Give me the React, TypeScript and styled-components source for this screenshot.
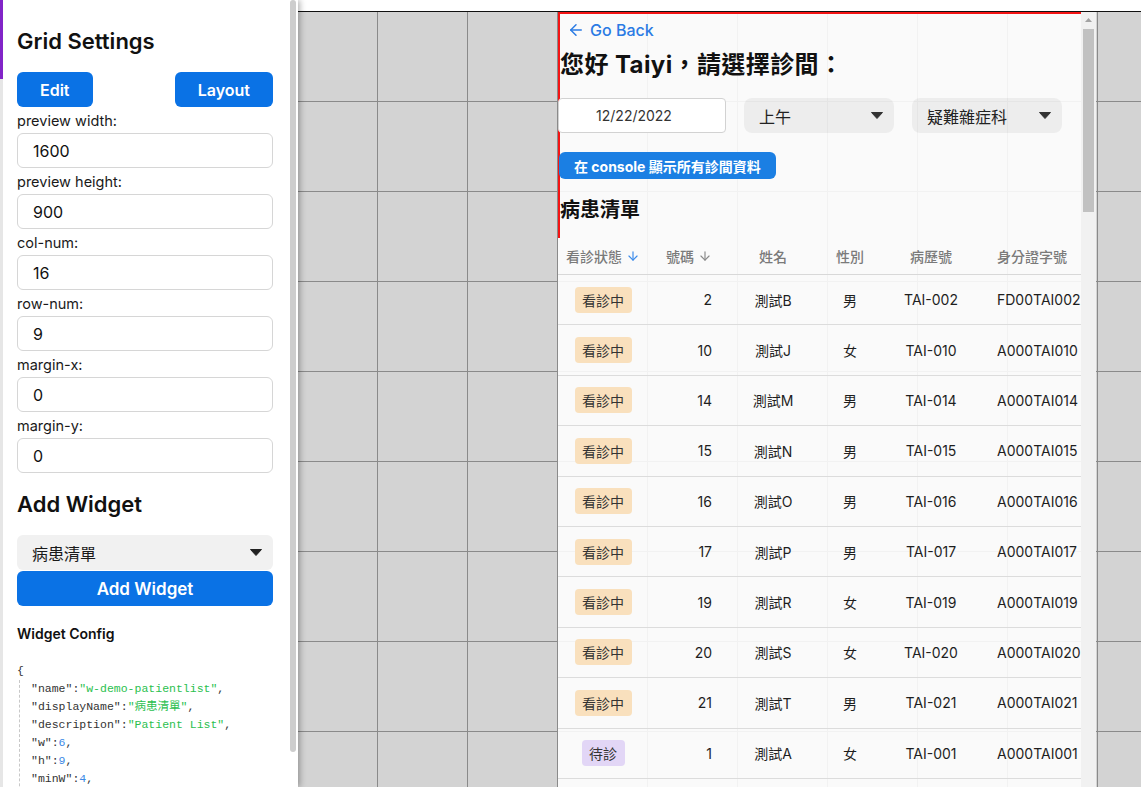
import React from "react";
import styled, { createGlobalStyle } from "styled-components";
import { ArrowLeft, ArrowDown } from "lucide-react";

if (typeof document !== "undefined") {
  document.documentElement.lang = "zh-Hant-TW";
}

const GlobalStyle = createGlobalStyle`
  html, body { margin: 0; padding: 0; height: 100%; overflow: hidden; }
  body {
    font-family: Inter, "Noto Sans CJK TC", sans-serif;
    color: #111;
    background: #fff;
  }
  #root { height: 100%; }
  *, *::before, *::after { box-sizing: border-box; }
`;

const Page = styled.div`
  display: flex;
  width: 1141px;
  height: 787px;
  overflow: hidden;
`;

/* ---------- Left settings panel ---------- */

const PanelFrame = styled.aside`
  position: relative;
  z-index: 2;
  flex: 0 0 298px;
  height: 100%;
  background: #fff;
  border-left: 3px solid;
  border-image: linear-gradient(to bottom, #8224c8 80px, #e6e6e6 80px) 1;
  box-shadow: 2px 0 6px rgba(0, 0, 0, 0.3);
`;

const PanelScroll = styled.div`
  height: 100%;
  overflow-y: auto;
  padding: 26px 25px 0 14px;
  scrollbar-width: none;
  &::-webkit-scrollbar { display: none; }
`;

const PanelThumb = styled.div`
  position: absolute;
  top: 0;
  right: 2px;
  width: 6px;
  height: 752px;
  border-radius: 3px;
  background: #cdcdcd;
`;

const PanelTitle = styled.h2<{ $mt?: number }>`
  margin: ${(p) => p.$mt ?? 0}px 0 0;
  font-size: 22px;
  line-height: 30px;
  font-weight: 600;
  color: #111;
`;

const ButtonRow = styled.div`
  display: flex;
  justify-content: space-between;
  margin-top: 16px;
`;

const PrimaryButton = styled.button<{ $full?: boolean }>`
  display: block;
  height: 35px;
  padding: 0 23px;
  border: none;
  border-radius: 6px;
  background: #0a72e5;
  color: #fff;
  font-family: inherit;
  font-size: ${(p) => (p.$full ? 17 : 16)}px;
  font-weight: 600;
  width: ${(p) => (p.$full ? "100%" : "auto")};
  margin-top: ${(p) => (p.$full ? 1 : 0)}px;
  cursor: pointer;
`;

const FieldLabel = styled.label`
  display: block;
  margin-top: 4px;
  font-size: 14.5px;
  line-height: 20px;
  color: #1a1a1a;
`;

const TextInput = styled.input`
  display: block;
  width: 100%;
  height: 35px;
  margin-top: 2px;
  padding: 0 15px;
  border: 1px solid #d6d6d6;
  border-radius: 6px;
  background: #fff;
  font-family: inherit;
  font-size: 16px;
  color: #111;
  outline: none;
`;

const PanelSelect = styled.div`
  display: flex;
  align-items: center;
  justify-content: space-between;
  height: 35px;
  margin-top: 16px;
  padding: 0 11px 0 15px;
  border-radius: 6px;
  background: #f1f1f1;
  font-size: 16px;
  color: #1a1a1a;
`;

const ConfigTitle = styled.h3`
  margin: 18px 0 0;
  font-size: 14px;
  line-height: 20px;
  font-weight: 600;
  color: #111;
`;

const Code = styled.div`
  margin-top: 18px;
  font-family: "Liberation Mono", "Noto Sans CJK TC", monospace;
  font-size: 11.5px;
  line-height: 18px;
  color: #333;
  white-space: pre;
`;

const CodeIndent = styled.div`
  margin-left: 2px;
  padding-left: 11px;
  border-left: 1px dashed #c8c8c8;
`;

const Str = styled.span`
  color: #2bbf4f;
`;

const Num = styled.span`
  color: #3d8ae6;
`;

const Caret = ({ color = "#222" }: { color?: string }) => (
  <svg width="12" height="7" viewBox="0 0 12 7">
    <path d="M0.5 0.5 L11.5 0.5 L6 6.5 Z" fill={color} strokeLinejoin="round" stroke={color} strokeWidth="1" />
  </svg>
);

/* ---------- Canvas ---------- */

const Canvas = styled.main`
  position: relative;
  flex: 1;
  overflow: hidden;
  background: #fff;
  padding-top: 11px;
`;

const Grid = styled.div`
  position: relative;
  margin-left: -11px;
  width: 1440px;
  height: 810px;
  background-color: #d3d3d3;
  background-image:
    linear-gradient(#111, #111),
    linear-gradient(to right, #8a8a8a 1px, transparent 1px),
    linear-gradient(to bottom, #8a8a8a 1px, transparent 1px);
  background-size: 100% 1px, 90px 90px, 90px 90px;
  background-repeat: no-repeat, repeat, repeat;
`;

const Widget = styled.section<{ $col: number }>`
  position: absolute;
  top: 1px;
  left: ${(p) => p.$col * 90 + 1}px;
  width: 538px;
  height: 809px;
  display: flex;
  background: rgba(255, 255, 255, 0.886);
`;

const WidgetScroll = styled.div`
  flex: 1;
  min-width: 0;
  overflow-y: auto;
  overflow-x: hidden;
  scrollbar-width: none;
  &::-webkit-scrollbar { display: none; }
`;

const ScrollRail = styled.div`
  flex: 0 0 15px;
  display: flex;
  flex-direction: column;
  align-items: center;
  background: #f1f1f1;
`;

const RailButton = styled.div`
  display: flex;
  align-items: center;
  justify-content: center;
  width: 15px;
  height: 15px;
`;

const RailThumb = styled.div<{ $h: number }>`
  width: 11px;
  height: ${(p) => p.$h}px;
  margin-top: 2px;
  background: #c1c1c1;
`;

const WidgetBody = styled.div`
  border-top: 2px solid #f41414;
`;

const Intro = styled.div`
  border-left: 2px solid #f41414;
  padding: 4px 0 14px;
`;

const GoBack = styled.a`
  display: inline-flex;
  align-items: center;
  gap: 5px;
  height: 24px;
  padding-left: 7px;
  color: #2b7be4;
  font-size: 16px;
  font-weight: 500;
  text-decoration: none;
`;

const Greeting = styled.h1`
  margin: 6px 0 0;
  font-size: 24px;
  line-height: 32px;
  font-weight: 700;
  color: #111;
  white-space: nowrap;
  letter-spacing: 0.4px;
`;

const Controls = styled.div`
  display: flex;
  gap: 18px;
  margin: 17px 0 0 -2px;
`;

const DateBox = styled.input`
  width: 168px;
  height: 35px;
  padding: 0 16px 0 0;
  border: 1px solid #d2d2d2;
  border-radius: 4px;
  background: #fff;
  text-align: center;
  font-family: inherit;
  font-size: 14px;
  color: #333;
  outline: none;
`;

const ChoiceBox = styled.div`
  display: flex;
  align-items: center;
  justify-content: space-between;
  width: 150px;
  height: 35px;
  padding: 0 11px 0 15px;
  border-radius: 8px;
  background: rgba(0, 0, 0, 0.05);
  font-size: 16px;
  color: #222;
`;

const ConsoleButton = styled.button`
  display: block;
  height: 27px;
  margin: 19px 0 0 -1px;
  padding: 0 15px;
  border: none;
  border-radius: 6px;
  background: #1b7fe3;
  color: #fff;
  font-family: inherit;
  font-size: 14px;
  font-weight: 700;
  white-space: nowrap;
`;

const SectionTitle = styled.h2`
  margin: 17px 0 0;
  font-size: 20px;
  line-height: 28px;
  font-weight: 700;
  color: #111;
`;

const COLS = "90px 80px 90px 64px 98px 1fr";

const HeadRow = styled.div`
  display: grid;
  grid-template-columns: ${COLS};
  height: 37px;
  border-bottom: 1px solid #d8d8d8;
  font-size: 14px;
  font-weight: 500;
  color: #7a7a7a;
`;

const BodyRow = styled.div`
  display: grid;
  grid-template-columns: ${COLS};
  height: 50.4px;
  border-bottom: 1px solid #dcdcdc;
  font-size: 14px;
  color: #1e1e1e;
`;

const Cell = styled.div<{ $align: "left" | "center" | "right" }>`
  display: flex;
  align-items: center;
  gap: 4px;
  white-space: nowrap;
  justify-content: ${(p) =>
    p.$align === "left" ? "flex-start" : p.$align === "right" ? "flex-end" : "center"};
  padding-left: ${(p) => (p.$align === "left" ? 17 : 0)}px;
  padding-right: ${(p) => (p.$align === "right" ? 16 : 0)}px;
`;

const Badge = styled.span<{ $kind: "active" | "waiting" }>`
  display: inline-flex;
  align-items: center;
  height: 26px;
  padding: 0 7.5px;
  border-radius: 4px;
  background: ${(p) => (p.$kind === "active" ? "#f9e0bd" : "#e2d6f6")};
  color: #333;
  font-size: 14px;
`;

type Patient = { status: "active" | "waiting"; no: number; name: string; sex: string; chart: string; nid: string };

const active: Array<[number, string, string, string]> = [
  [2, "B", "男", "FD00TAI002"],
  [10, "J", "女", "A000TAI010"],
  [14, "M", "男", "A000TAI014"],
  [15, "N", "男", "A000TAI015"],
  [16, "O", "男", "A000TAI016"],
  [17, "P", "男", "A000TAI017"],
  [19, "R", "女", "A000TAI019"],
  [20, "S", "女", "A000TAI020"],
  [21, "T", "男", "A000TAI021"],
];

const pad3 = (n: number) => String(n).padStart(3, "0");
const letter = (n: number) =>
  n <= 26 ? String.fromCharCode(64 + n) : String.fromCharCode(64 + Math.ceil(n / 26) - 1) + String.fromCharCode(65 + ((n - 1) % 26));

const patients: Patient[] = active.map(([no, l, sex, nid]) => ({
  status: "active" as const,
  no,
  name: "測試" + l,
  sex,
  chart: "TAI-" + pad3(no),
  nid,
}));
{
  const taken = new Set(active.map((a) => a[0]));
  let n = 1;
  while (patients.length < 63) {
    if (!taken.has(n)) {
      patients.push({
        status: "waiting",
        no: n,
        name: "測試" + letter(n),
        sex: n % 2 ? "女" : "男",
        chart: "TAI-" + pad3(n),
        nid: "A000TAI" + pad3(n),
      });
    }
    n++;
  }
}

export default function App() {
  return (
    <>
      <GlobalStyle />
      <Page lang="zh-Hant-TW">
        <PanelFrame>
          <PanelScroll>
            <PanelTitle>Grid Settings</PanelTitle>
            <ButtonRow>
              <PrimaryButton>Edit</PrimaryButton>
              <PrimaryButton>Layout</PrimaryButton>
            </ButtonRow>
            {[
              ["preview width:", "1600"],
              ["preview height:", "900"],
              ["col-num:", "16"],
              ["row-num:", "9"],
              ["margin-x:", "0"],
              ["margin-y:", "0"],
            ].map(([label, value]) => (
              <React.Fragment key={label}>
                <FieldLabel>{label}</FieldLabel>
                <TextInput defaultValue={value} />
              </React.Fragment>
            ))}
            <PanelTitle $mt={16}>Add Widget</PanelTitle>
            <PanelSelect>
              <span>病患清單</span>
              <Caret />
            </PanelSelect>
            <PrimaryButton $full>Add Widget</PrimaryButton>
            <ConfigTitle>Widget Config</ConfigTitle>
            <Code>
              <div>{"{"}</div>
              <CodeIndent>
                <div>"name":<Str>"w-demo-patientlist"</Str>,</div>
                <div>"displayName":<Str>"病患清單"</Str>,</div>
                <div>"description":<Str>"Patient List"</Str>,</div>
                <div>"w":<Num>6</Num>,</div>
                <div>"h":<Num>9</Num>,</div>
                <div>"minW":<Num>4</Num>,</div>
                <div>"minH":<Num>6</Num></div>
              </CodeIndent>
              <div>{"}"}</div>
            </Code>
          </PanelScroll>
          <PanelThumb />
        </PanelFrame>

        <Canvas>
          <Grid>
            <Widget $col={3}>
              <WidgetScroll>
                <WidgetBody>
                  <Intro>
                    <GoBack href="#">
                      <ArrowLeft size={18} strokeWidth={2} />
                      Go Back
                    </GoBack>
                    <Greeting>您好 Taiyi，請選擇診間：</Greeting>
                    <Controls>
                      <DateBox defaultValue="12/22/2022" />
                      <ChoiceBox>
                        <span>上午</span>
                        <Caret color="#333" />
                      </ChoiceBox>
                      <ChoiceBox>
                        <span>疑難雜症科</span>
                        <Caret color="#333" />
                      </ChoiceBox>
                    </Controls>
                    <ConsoleButton>在 console 顯示所有診間資料</ConsoleButton>
                    <SectionTitle>病患清單</SectionTitle>
                  </Intro>
                  <HeadRow>
                    <Cell $align="center">
                      看診狀態
                      <ArrowDown size={14} color="#3b8beb" strokeWidth={2} />
                    </Cell>
                    <Cell $align="right">
                      號碼
                      <ArrowDown size={14} color="#8a8a8a" strokeWidth={2} />
                    </Cell>
                    <Cell $align="center">姓名</Cell>
                    <Cell $align="center">性別</Cell>
                    <Cell $align="center">病歷號</Cell>
                    <Cell $align="left">身分證字號</Cell>
                  </HeadRow>
                  {patients.map((p) => (
                    <BodyRow key={p.no}>
                      <Cell $align="center">
                        <Badge $kind={p.status}>{p.status === "active" ? "看診中" : "待診"}</Badge>
                      </Cell>
                      <Cell $align="right">{p.no}</Cell>
                      <Cell $align="center">{p.name}</Cell>
                      <Cell $align="center">{p.sex}</Cell>
                      <Cell $align="center">{p.chart}</Cell>
                      <Cell $align="left">{p.nid}</Cell>
                    </BodyRow>
                  ))}
                </WidgetBody>
              </WidgetScroll>
              <ScrollRail>
                <RailButton>
                  <svg width="7" height="4" viewBox="0 0 7 4">
                    <path d="M0 4 L3.5 0 L7 4 Z" fill="#a3a3a3" />
                  </svg>
                </RailButton>
                <RailThumb $h={183} />
              </ScrollRail>
            </Widget>
          </Grid>
        </Canvas>
      </Page>
    </>
  );
}
